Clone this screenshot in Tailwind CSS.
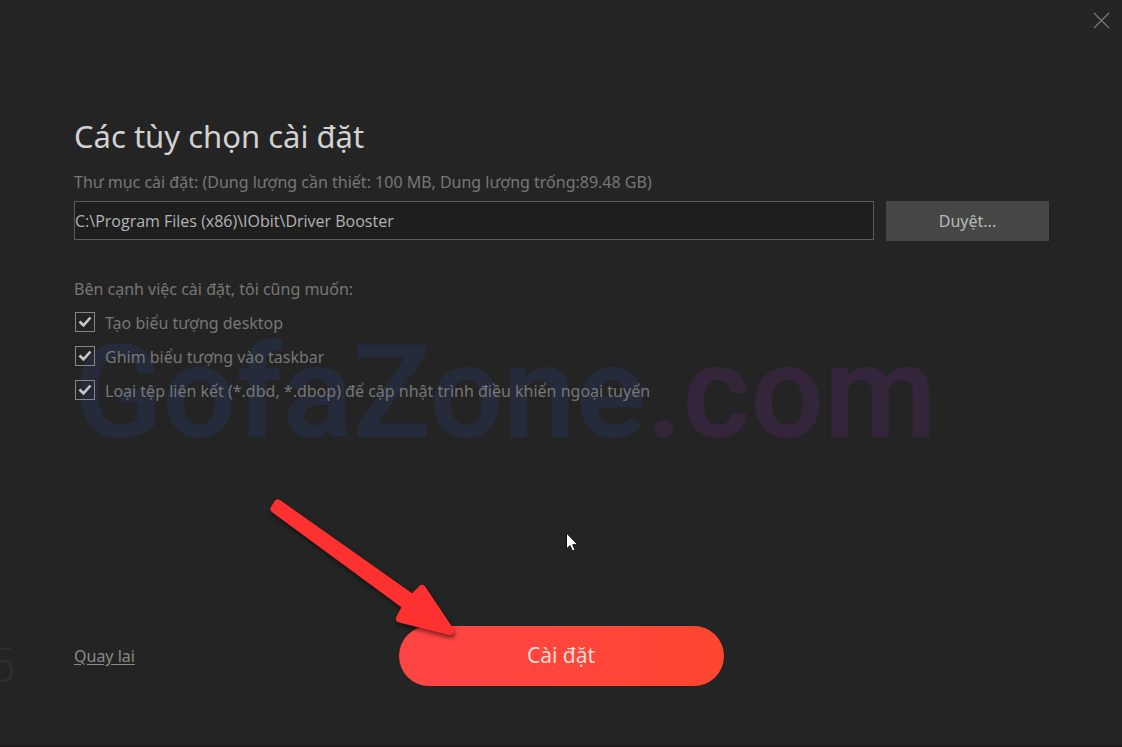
<!DOCTYPE html>
<html lang="vi">
<head>
<meta charset="utf-8">
<meta name="viewport" content="width=device-width, initial-scale=1">
<title>Driver Booster – Cài đặt</title>
<script src="https://cdn.jsdelivr.net/npm/@tailwindcss/browser@4"></script>
</head>
<body class="relative flex min-h-screen flex-col overflow-x-hidden border-b-2 border-[#1e1918] bg-[#242424] font-['Noto_Sans','Open_Sans',sans-serif] text-base text-[#777777]">

  <!-- Watermark -->
  <div aria-hidden="true" class="pointer-events-none absolute top-[343px] left-[74px] font-['Roboto',sans-serif] text-[130px] leading-[100px] font-semibold whitespace-nowrap text-[#252b3b]">GofaZone<span class="text-[#35253b]">.com</span></div>
  <div aria-hidden="true" class="pointer-events-none absolute top-[640px] -left-3 font-['Open_Sans',sans-serif] text-5xl leading-[48px] font-light text-[#303030]">6</div>

  <header class="flex h-10 justify-end px-3 pt-3">
    <button type="button" aria-label="Đóng" class="size-[18px] text-[#7c7c7c]">
      <svg viewBox="0 0 18 18" class="size-[18px]" fill="none" stroke="currentColor" stroke-width="1.1"><path d="M2 1 17 16M17 1 2 16"/></svg>
    </button>
  </header>

  <main class="relative flex flex-1 flex-col px-[73px] pt-[72px] pl-[74px]">
    <h1 class="text-[31px] leading-12 text-[#d2d2d2]">Các tùy chọn cài đặt</h1>
    <label for="folder" class="mt-2.5 leading-6">Thư mục cài đặt: (Dung lượng cần thiết: 100 MB, Dung lượng trống:89.48 GB)</label>
    <div class="mt-[7px] flex items-start gap-3">
      <input id="folder" type="text" value="C:\Program Files (x86)\IObit\Driver Booster" class="h-[39px] min-w-0 flex-1 border border-[#5a5a5a] bg-[#1e1e1e] font-['Open_Sans',sans-serif] text-base text-[#b4b4b4] outline-none">
      <button type="button" class="h-10 w-[163px] bg-[#464646] text-base text-[#b8b8b8]">Duyệt...</button>
    </div>

    <fieldset class="mt-9">
      <legend class="leading-6">Bên cạnh việc cài đặt, tôi cũng muốn:</legend>
      <div class="mt-[5px] flex flex-col">
        <label class="flex h-[34px] items-center gap-2.5">
          <span class="relative -mt-0.5 ml-px size-5">
            <input type="checkbox" checked class="peer block size-5 appearance-none border border-[#858585]">
            <svg viewBox="0 0 20 20" class="pointer-events-none absolute inset-0 hidden size-5 peer-checked:block" fill="none" stroke="#c8c8c8" stroke-width="2.600"><path d="M4.500 9.500 8.500 13.300 15.500 5.500"/></svg>
          </span>
          Tạo biểu tượng desktop
        </label>
        <label class="flex h-[34px] items-center gap-2.5">
          <span class="relative -mt-0.5 ml-px size-5">
            <input type="checkbox" checked class="peer block size-5 appearance-none border border-[#858585]">
            <svg viewBox="0 0 20 20" class="pointer-events-none absolute inset-0 hidden size-5 peer-checked:block" fill="none" stroke="#c8c8c8" stroke-width="2.600"><path d="M4.500 9.500 8.500 13.300 15.500 5.500"/></svg>
          </span>
          Ghim biểu tượng vào taskbar
        </label>
        <label class="flex h-[34px] items-center gap-2.5">
          <span class="relative -mt-0.5 ml-px size-5">
            <input type="checkbox" checked class="peer block size-5 appearance-none border border-[#858585]">
            <svg viewBox="0 0 20 20" class="pointer-events-none absolute inset-0 hidden size-5 peer-checked:block" fill="none" stroke="#c8c8c8" stroke-width="2.600"><path d="M4.500 9.500 8.500 13.300 15.500 5.500"/></svg>
          </span>
          Loại tệp liên kết (*.dbd, *.dbop) để cập nhật trình điều khiển ngoại tuyến
        </label>
      </div>
    </fieldset>
  </main>

  <footer class="grid grid-cols-[1fr_auto_1fr] items-center px-[74px] pt-10 pb-[59px]">
    <a href="#" class="justify-self-start text-base text-[#8a8a8a] underline underline-offset-2">Quay lai</a>
    <button type="button" class="h-[60px] w-[325px] rounded-full bg-linear-to-r from-[#ff4545] to-[#ff4630] text-[21px] text-[#ffdcd6]">Cài đặt</button>
  </footer>

  <!-- Pointing arrow -->
  <svg aria-hidden="true" class="pointer-events-none absolute top-[490px] left-[260px] h-[160px] w-[210px] drop-shadow-[1px_3px_2px_rgba(0,0,0,0.5)]" viewBox="260 490 210 160" fill="#ff3030" stroke="#ff3030" stroke-width="8" stroke-linejoin="round">
    <path d="M278 503.500 412.500 598.500 422 589 450 631 400 618.500 406.500 606 274.500 509Z"/>
  </svg>

  <!-- Mouse cursor -->
  <svg aria-hidden="true" class="pointer-events-none absolute top-[532px] left-[565px] h-[21px] w-[14px]" viewBox="0 0 14 21" fill="#fff" stroke="#111" stroke-width="1"><path d="M1.500 1V17L5 13.600 7.500 19 10 18 7.700 12.700H12.700Z"/></svg>
</body>
</html>
